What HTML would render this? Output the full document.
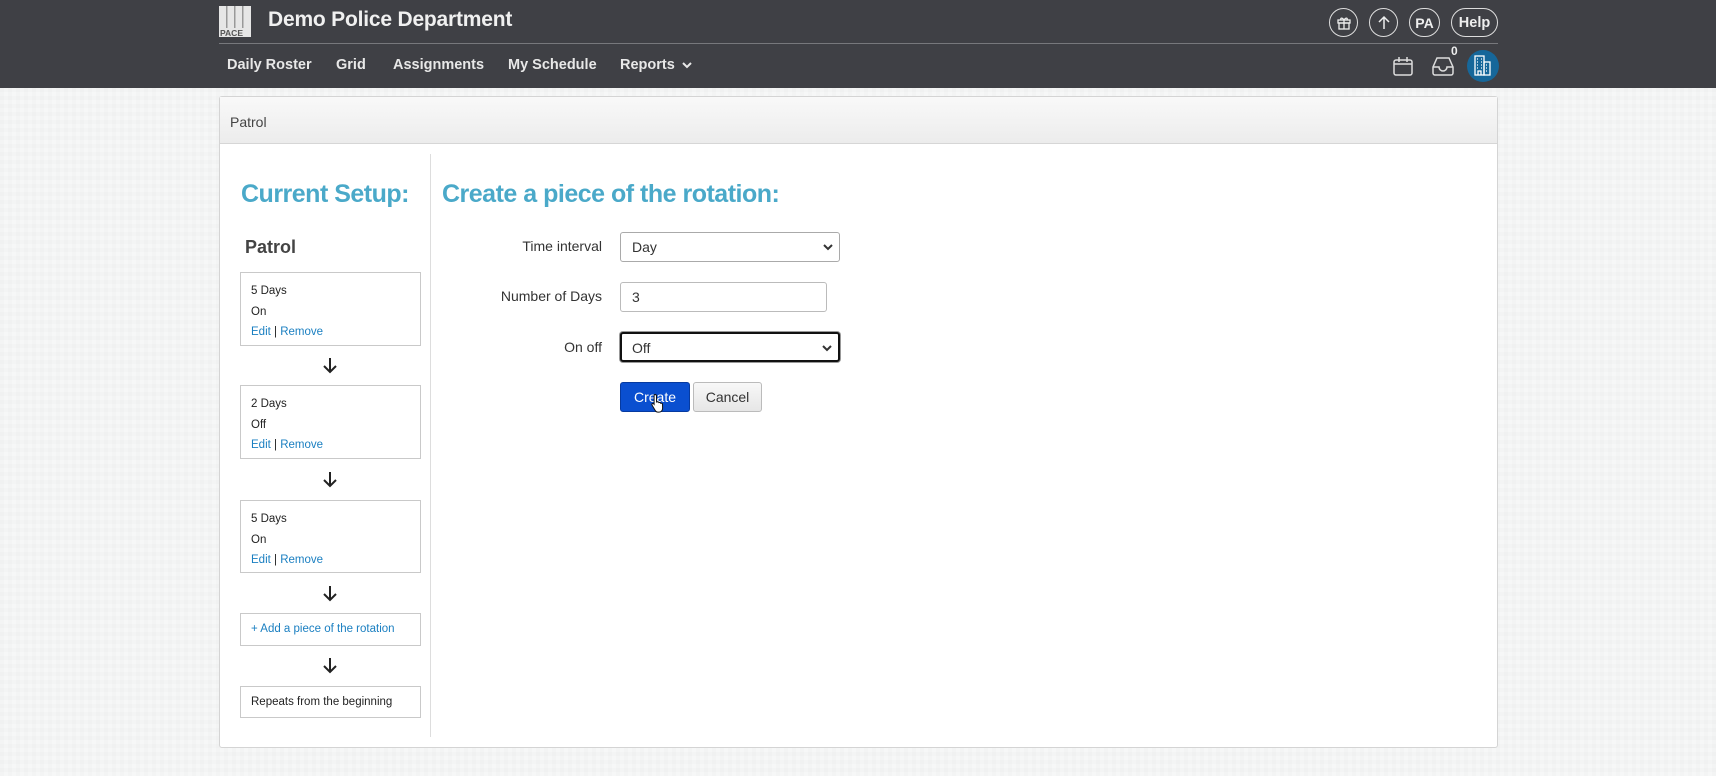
<!DOCTYPE html>
<html><head><meta charset="utf-8">
<style>
*{margin:0;padding:0;box-sizing:border-box}
body{width:1716px;height:776px;overflow:hidden;font-family:"Liberation Sans",sans-serif;background:#f6f7f7;position:relative;
background-image:linear-gradient(90deg,rgba(0,0,0,0.012) 50%,transparent 50%),linear-gradient(rgba(0,0,0,0.012) 50%,transparent 50%);background-size:8px 8px}
.a{position:absolute}
#hdr{left:0;top:0;width:1716px;height:88px;background:#3f4045}
#line{left:219px;top:43px;width:1279px;height:1px;background:#77787c}
.title{left:268px;top:8px;color:#f0f0f0;font-size:21px;font-weight:bold;letter-spacing:-0.2px}
.nav{top:57px;color:#e8e8e8;font-size:14.5px;font-weight:bold}
.circ{top:8px;width:29px;height:29px;border:1.3px solid #ddd;border-radius:15px;color:#eee;font-weight:bold;font-size:14px;display:flex;align-items:center;justify-content:center}
#panel{left:219px;top:96px;width:1279px;height:652px;background:#fff;border:1px solid #d4d4d4;border-radius:3px}
#ph{left:0;top:0;width:1277px;height:47px;background:linear-gradient(#f9f9f9,#ececec);border-bottom:1px solid #d6d6d6}
.h2{color:#4aa9c9;font-size:25px;font-weight:bold;letter-spacing:-0.5px}
.box{left:240px;width:181px;border:1px solid #c9c9c9;background:#fff;font-size:11.5px;color:#222;padding-left:10px}
.lnk{color:#1a7fc1}
.arr{left:322px}
.lbl{right:1114px;font-size:14px;color:#333;text-align:right}
.inp{left:620px;height:30px;border:1px solid #aaa;border-radius:3px;background:#fff;font-size:14px;color:#333;padding-left:11px;line-height:28px}
.chev{position:absolute;right:6px;top:10px}
</style></head><body>
<div id="hdr" class="a"></div>
<div id="line" class="a"></div>
<svg class="a" style="left:219px;top:6px" width="32" height="31" viewBox="0 0 32 31">
<rect width="32" height="31" fill="#e6e6e6"/>
<rect x="7" y="0" width="1.5" height="22" fill="#999"/><rect x="15" y="0" width="1.5" height="22" fill="#999"/><rect x="23" y="0" width="1.5" height="22" fill="#999"/>
<text x="1" y="30" font-size="8.5" font-weight="bold" fill="#555" font-family="Liberation Sans">PACE</text>
</svg>
<div class="a title">Demo Police Department</div>
<div class="a nav" style="left:227px">Daily Roster</div>
<div class="a nav" style="left:336px">Grid</div>
<div class="a nav" style="left:393px">Assignments</div>
<div class="a nav" style="left:508px">My Schedule</div>
<div class="a nav" style="left:620px">Reports</div>
<svg class="a" style="left:681px;top:61px" width="12" height="9" viewBox="0 0 12 9"><path d="M2 2l4 4 4-4" stroke="#e8e8e8" stroke-width="2" fill="none"/></svg>

<div class="a circ" style="left:1329px"><svg width="16" height="16" viewBox="0 0 16 16" fill="none" stroke="#eee" stroke-width="1.3"><rect x="2" y="5" width="12" height="3"/><rect x="3" y="8" width="10" height="6"/><path d="M8 5v9M8 5C6 2 4 3 5 5M8 5c2-3 4-2 3 0"/></svg></div>
<div class="a circ" style="left:1369px"><svg width="16" height="16" viewBox="0 0 16 16" fill="none" stroke="#eee" stroke-width="1.5"><path d="M8 14V2M3 7l5-5 5 5"/></svg></div>
<div class="a circ" style="left:1409px;width:31px">PA</div>
<div class="a circ" style="left:1451px;width:47px;font-size:14.5px">Help</div>

<svg class="a" style="left:1393px;top:56px" width="20" height="20" viewBox="0 0 20 20" fill="none" stroke="#ddd" stroke-width="1.5"><rect x="1" y="4" width="18" height="15" rx="2"/><path d="M1 8h18M6 1v5M14 1v5"/></svg>
<svg class="a" style="left:1432px;top:56px" width="22" height="20" viewBox="0 0 22 20" fill="none" stroke="#ddd" stroke-width="1.5"><path d="M1 11L5 2h12l4 9v6a2 2 0 0 1-2 2H3a2 2 0 0 1-2-2z"/><path d="M1 11h6a4 4 0 0 0 8 0h6"/></svg>
<div class="a" style="left:1451px;top:44px;color:#eee;font-size:12px;font-weight:bold">0</div>
<div class="a" style="left:1467px;top:50px;width:32px;height:32px;border-radius:16px;background:#16679a"></div>
<svg class="a" style="left:1473px;top:55px" width="20" height="22" viewBox="0 0 20 22" fill="none" stroke="#fff" stroke-width="1.3"><rect x="2" y="1" width="9" height="19"/><rect x="11" y="7" width="6" height="13"/><path d="M4 4h1M8 4h1M4 7h1M8 7h1M4 10h1M8 10h1M4 13h1M8 13h1M13 10h1M13 13h1M13 16h1M5 20v-4h3v4" /></svg>

<div id="panel" class="a">
<div id="ph" class="a"></div>
<div class="a" style="left:10px;top:17px;font-size:14px;color:#444">Patrol</div>
<div class="a" style="left:210px;top:57px;width:1px;height:583px;background:#ddd"></div>
</div>
<div class="a h2" style="left:241px;top:180px">Current Setup:</div>
<div class="a h2" style="left:442px;top:180px">Create a piece of the rotation:</div>
<div class="a" style="left:245px;top:237px;font-size:18px;font-weight:bold;color:#444">Patrol</div>

<div class="a box" style="top:272px;height:74px;padding-top:8px;line-height:20.5px">5 Days<br>On<br><span class="lnk">Edit</span> | <span class="lnk">Remove</span></div>
<svg class="a arr" style="top:357px" width="16" height="17" viewBox="0 0 16 17"><path d="M8 1v14M2 9l6 6 6-6" stroke="#222" stroke-width="2" fill="none"/></svg>
<div class="a box" style="top:385px;height:74px;padding-top:8px;line-height:20.5px">2 Days<br>Off<br><span class="lnk">Edit</span> | <span class="lnk">Remove</span></div>
<svg class="a arr" style="top:471px" width="16" height="17" viewBox="0 0 16 17"><path d="M8 1v14M2 9l6 6 6-6" stroke="#222" stroke-width="2" fill="none"/></svg>
<div class="a box" style="top:500px;height:73px;padding-top:8px;line-height:20.5px">5 Days<br>On<br><span class="lnk">Edit</span> | <span class="lnk">Remove</span></div>
<svg class="a arr" style="top:585px" width="16" height="17" viewBox="0 0 16 17"><path d="M8 1v14M2 9l6 6 6-6" stroke="#222" stroke-width="2" fill="none"/></svg>
<div class="a box lnk" style="top:613px;height:33px;line-height:31px;color:#1a7fc1">+ Add a piece of the rotation</div>
<svg class="a arr" style="top:657px" width="16" height="17" viewBox="0 0 16 17"><path d="M8 1v14M2 9l6 6 6-6" stroke="#222" stroke-width="2" fill="none"/></svg>
<div class="a box" style="top:686px;height:32px;line-height:30px">Repeats from the beginning</div>

<div class="a lbl" style="top:238px">Time interval</div>
<div class="a lbl" style="top:288px">Number of Days</div>
<div class="a lbl" style="top:339px">On off</div>
<div class="a inp" style="top:232px;width:220px">Day<svg class="chev" width="10" height="8" viewBox="0 0 10 8"><path d="M1 2l4 4 4-4" stroke="#333" stroke-width="2" fill="none"/></svg></div>
<div class="a inp" style="top:282px;width:207px;border-color:#bbb">3</div>
<div class="a inp" style="top:332px;width:220px;border:2px solid #111;box-shadow:0 0 0 1px #999;padding-left:10px">Off<svg class="chev" width="10" height="8" viewBox="0 0 10 8"><path d="M1 2l4 4 4-4" stroke="#333" stroke-width="2" fill="none"/></svg></div>
<div class="a" style="left:620px;top:382px;width:70px;height:30px;background:#0a4fd0;border:1px solid #063aa0;border-radius:3px;color:#fff;font-size:14px;line-height:28px;text-align:center">Create</div>
<div class="a" style="left:693px;top:382px;width:69px;height:30px;background:linear-gradient(#f8f8f8,#e6e6e6);border:1px solid #bbb;border-radius:3px;color:#333;font-size:14px;line-height:28px;text-align:center">Cancel</div>
<svg class="a" style="left:650px;top:393px" width="16" height="20" viewBox="0 0 16 20"><path d="M5 1.5c1 0 1.5.6 1.5 1.5v6l1-.2c.9 0 1.2.4 1.4.8.9-.3 1.6 0 1.8.7.9-.3 1.700.1 1.8 1l.1 4c0 2-1.3 3.8-3.5 3.8H8c-1.3 0-2.4-.8-3-2L2 12c-.4-.7 0-1.4.7-1.5.6 0 1 .3 1.4.8V3c0-.9.4-1.5.9-1.5z" fill="#fff" stroke="#111" stroke-width="1"/></svg>
</body></html>
